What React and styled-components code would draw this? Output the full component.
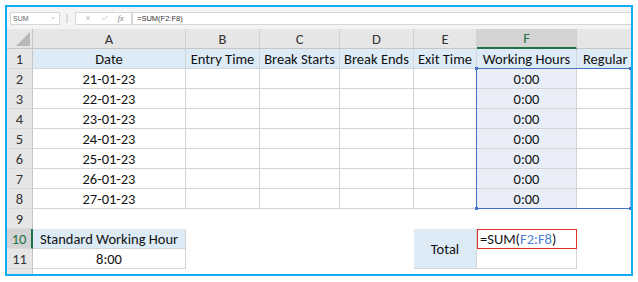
import React from "react";
import styled, { createGlobalStyle, css } from "styled-components";
import { X, Check, ChevronDown } from "lucide-react";

const GlobalStyle = createGlobalStyle`
  html, body { margin: 0; padding: 0; background: #fff; }
  body { font-family: Carlito, Lato, "Open Sans", sans-serif; }
`;

const Frame = styled.div`
  margin: 5px;
  width: 628px;
  height: 271px;
  box-sizing: border-box;
  border: 2px solid #11adf0;
  overflow: hidden;
  display: flex;
  flex-direction: column;
  background: #fff;
`;

const FormulaBar = styled.div`
  height: 22px;
  flex: none;
  display: flex;
  align-items: center;
  padding-left: 3px;
  background: #f4f4f4;
  box-sizing: border-box;
  font-family: "Liberation Sans", Arial, sans-serif;
`;

const NameBox = styled.div`
  width: 50px;
  height: 13px;
  box-sizing: border-box;
  background: #fff;
  border: 1px solid #d6d6d6;
  display: flex;
  align-items: center;
  justify-content: space-between;
  padding: 0 3px 0 2px;
  font-size: 7px;
  color: #666;
`;

const Grip = styled.div`
  width: 2px;
  height: 9px;
  margin: 0 7px 0 6px;
  background: #dcdcdc;
`;

const ButtonBox = styled.div`
  width: 57px;
  height: 13px;
  box-sizing: border-box;
  background: #fff;
  border: 1px solid #d6d6d6;
  display: flex;
  align-items: center;
  justify-content: space-around;
  padding: 0 3px;
  color: #8a8a8a;
  font-size: 7px;
`;

const Fx = styled.span`
  font-style: italic;
  font-family: "Liberation Serif", serif;
  font-size: 8px;
  color: #777;
`;

const FormulaInput = styled.div`
  flex: 1;
  height: 13px;
  box-sizing: border-box;
  background: #fff;
  border: 1px solid #d6d6d6;
  border-right: none;
  display: flex;
  align-items: center;
  padding-left: 4px;
  font-size: 7.5px;
  color: #333;
`;

const Sheet = styled.div`
  position: relative;
  display: grid;
  grid-template-columns: 26px 153px 74px 80px 74px 63px 100px 100px;
  grid-auto-rows: 20px;
  font-size: 14.5px;
  color: #111;
`;

const Corner = styled.div`
  position: relative;
  background: #e6e6e6;
  border-right: 1px solid #c6c6c6;
  border-bottom: 1px solid #c6c6c6;
  box-sizing: border-box;
  &::after {
    content: "";
    position: absolute;
    right: 2px;
    bottom: 2px;
    width: 0;
    height: 0;
    border-left: 14px solid transparent;
    border-bottom: 14px solid #b9b9b9;
  }
`;

const ColHead = styled.div`
  box-sizing: border-box;
  display: flex;
  align-items: center;
  justify-content: center;
  background: ${(p) => (p.$active ? "#d3d3d3" : "#e6e6e6")};
  color: ${(p) => (p.$active ? "#217346" : "#333")};
  border-right: 1px solid #d0d0d0;
  border-bottom: ${(p) => (p.$active ? "2px solid #217346" : "1px solid #c6c6c6")};
`;

const RowHead = styled.div`
  box-sizing: border-box;
  display: flex;
  align-items: center;
  justify-content: center;
  background: ${(p) => (p.$active ? "#d3d3d3" : "#e6e6e6")};
  color: ${(p) => (p.$active ? "#217346" : "#333")};
  border-right: ${(p) => (p.$active ? "2px solid #217346" : "1px solid #c6c6c6")};
  border-bottom: 1px solid #dadada;
`;

const Cell = styled.div`
  box-sizing: border-box;
  display: flex;
  align-items: center;
  justify-content: ${(p) => (p.$left ? "flex-start" : "center")};
  padding-left: ${(p) => p.$left || "0"};
  white-space: nowrap;
  overflow: hidden;
  background: ${(p) => p.$bg || "#fff"};
  ${(p) => p.$span && css`grid-row: span ${p.$span};`}
  ${(p) =>
    p.$grid &&
    css`
      border-right: 1px solid #d4d4d4;
      border-bottom: 1px solid #d4d4d4;
    `}
  ${(p) =>
    p.$edit &&
    css`
      border: 1px solid #e0302a;
    `}
`;

const Ref = styled.span`
  color: #4a7fd6;
`;

/* reference highlight drawn over F2:F8 */
const Range = styled.div`
  position: absolute;
  grid-column: 7;
  grid-row: 3 / 10;
  top: -1px;
  left: -1px;
  right: 0;
  bottom: 0;
  border: 1px solid #4472c4;
  border-right-color: #93b4e6;
  pointer-events: none;
`;

const Handle = styled.span`
  position: absolute;
  width: 3px;
  height: 3px;
  background: #4472c4;
  ${(p) => (p.$top ? "top: -2px;" : "bottom: -2px;")}
  ${(p) => (p.$right ? "right: -2px;" : "left: -2px;")}
`;

const headers = ["Date", "Entry Time", "Break Starts", "Break Ends", "Exit Time", "Working Hours"];
const dates = ["21-01-23", "22-01-23", "23-01-23", "24-01-23", "25-01-23", "26-01-23", "27-01-23"];
const letters = ["A", "B", "C", "D", "E", "F", "G"];

export default function App() {
  return (
    <>
      <GlobalStyle />
      <Frame>
        <FormulaBar>
          <NameBox>
            <span>SUM</span>
            <ChevronDown size={6} strokeWidth={2} color="#888" />
          </NameBox>
          <Grip />
          <ButtonBox>
            <X size={8} strokeWidth={1.5} />
            <Check size={8} strokeWidth={1.5} />
            <Fx>fx</Fx>
          </ButtonBox>
          <FormulaInput>=SUM(F2:F8)</FormulaInput>
        </FormulaBar>

        <Sheet>
          <Corner />
          {letters.map((l) => (
            <ColHead key={l} $active={l === "F"}>{l === "G" ? "" : l}</ColHead>
          ))}

          <RowHead>1</RowHead>
          {headers.map((h) => (
            <Cell key={h} $grid $bg="#ddebf7">{h}</Cell>
          ))}
          <Cell $grid $bg="#ddebf7" $left="6px">Regular</Cell>

          {dates.map((d, i) => (
            <React.Fragment key={d}>
              <RowHead>{i + 2}</RowHead>
              <Cell $grid>{d}</Cell>
              <Cell $grid />
              <Cell $grid />
              <Cell $grid />
              <Cell $grid />
              <Cell $grid $bg="#e9eef8">0:00</Cell>
              <Cell $grid />
            </React.Fragment>
          ))}

          <RowHead>9</RowHead>
          {letters.map((l) => (
            <Cell key={"r9" + l} />
          ))}

          <RowHead $active>10</RowHead>
          <Cell $grid $bg="#ddebf7">Standard Working Hour</Cell>
          <Cell />
          <Cell />
          <Cell />
          <Cell $grid $bg="#ddebf7" $span={2}>Total</Cell>
          <Cell $edit $left="2px">
            =SUM(<Ref>F2:F8</Ref>)
          </Cell>
          <Cell />

          <RowHead>11</RowHead>
          <Cell $grid>8:00</Cell>
          <Cell />
          <Cell />
          <Cell />
          <Cell $grid />
          <Cell />

          <RowHead />

          <Range>
            <Handle $top />
            <Handle $top $right />
            <Handle />
            <Handle $right />
          </Range>
        </Sheet>
      </Frame>
    </>
  );
}
